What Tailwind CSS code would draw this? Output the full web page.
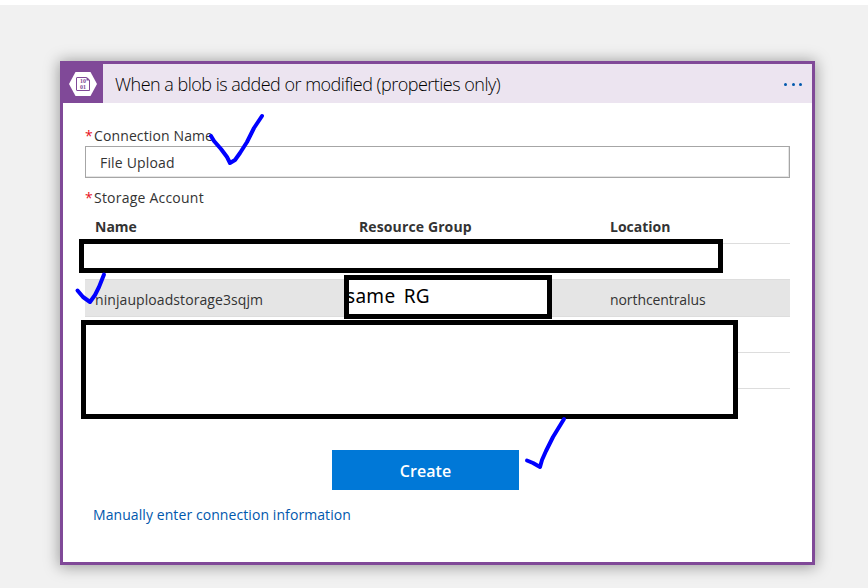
<!DOCTYPE html>
<html lang="en">
<head>
<meta charset="utf-8">
<title>Blob trigger connection</title>
<script src="https://cdn.jsdelivr.net/npm/@tailwindcss/browser@4"></script>
</head>
<body class="relative h-[588px] w-[868px] overflow-hidden border-t-[5px] border-white bg-[#f1f1f1] pt-[56px] pl-[60px] font-['Open_Sans','Noto_Sans',sans-serif] text-[14px] text-[#333]">
<main class="h-[504px] w-[755px] border-[3px] border-[#804998] bg-white shadow-[0_1px_14px_1px_rgba(0,0,0,0.36)]">
  <header class="flex h-[39px] items-center bg-[#ece4f0]">
    <div class="flex h-[39px] w-10 shrink-0 items-center bg-[#804998] pl-[6px]">
      <svg width="28" height="24" viewBox="0 0 28 24">
        <path d="M0 12 6.5 0H21.5L28 12 21.5 24H6.5Z" fill="#fff"/>
        <path d="M8 5.500H17.500L20.500 8V18.500H8Q7.500 18.500 7.500 18V6Q7.500 5.500 8 5.500Z" fill="none" stroke="#804998" stroke-width="1"/>
        <path d="M17.500 5V8.500H21Z" fill="#804998"/>
        <text x="11" y="11" font-family="Liberation Serif" font-size="5.500" font-weight="700" textLength="6" lengthAdjust="spacingAndGlyphs" fill="#804998">10</text>
        <text x="11" y="17" font-family="Liberation Serif" font-size="5.500" font-weight="700" textLength="6" lengthAdjust="spacingAndGlyphs" fill="#804998">01</text>
      </svg>
    </div>
    <h1 class="mt-px ml-3 flex-1 whitespace-nowrap text-[18px] leading-6 font-light tracking-[-0.51px] text-black">When a blob is added or modified (properties only)</h1>
    <div class="mt-[2px] mr-[10px] flex gap-[4.500px]">
      <i class="size-[3px] rounded-full bg-[#0058ad]"></i><i class="size-[3px] rounded-full bg-[#0058ad]"></i><i class="size-[3px] rounded-full bg-[#0058ad]"></i>
    </div>
  </header>
  <section class="pr-[22px] pl-[22px]">
    <div class="flex h-[43px] items-end leading-5 tracking-[0.12px]"><span class="w-[9px] text-[#e81123]">*</span><span>Connection Name</span></div>
    <div class="flex h-[32px] items-center border border-[#a6a6a6] pl-[14px] tracking-[0.17px] shadow-[inset_-1px_-1px_0_#e5e5e5]">File Upload</div>
    <div class="flex h-[30px] items-end leading-5 tracking-[0.22px]"><span class="w-[9px] text-[#e81123]">*</span><span>Storage Account</span></div>
    <table class="w-[705px] table-fixed border-collapse text-left">
      <colgroup><col class="w-[264px]"><col class="w-[251px]"><col></colgroup>
      <thead><tr class="h-[35px] border-b border-[#ddd]"><th class="p-0 pt-[3px] pl-[10px] font-bold">Name</th><th class="p-0 pt-[3px] pl-[10px] font-bold tracking-[0.12px]">Resource Group</th><th class="p-0 pt-[3px] pl-[10px] font-bold">Location</th></tr></thead>
      <tbody>
        <tr class="h-[36px] border-b border-[#ddd]"><td class="p-0" colspan="3"></td></tr>
        <tr class="h-[37px] border-b border-[#ddd] bg-[#e5e5e5]"><td class="p-0 pt-[3px] pl-[10px] tracking-[0.08px]">ninjauploadstorage3sqjm</td><td class="p-0"></td><td class="p-0 pt-[3px] pl-[10px] tracking-[-0.08px]">northcentralus</td></tr>
        <tr class="h-[36px] border-b border-[#ddd]"><td class="p-0" colspan="3"></td></tr>
        <tr class="h-[36px] border-b border-[#ddd]"><td class="p-0" colspan="3"></td></tr>
      </tbody>
    </table>
    <div class="mt-[61px] flex justify-center"><button class="mr-[24px] h-10 w-[187px] bg-[#0078d7] pt-[3px] text-[16px] font-semibold tracking-[0.1px] text-white">Create</button></div>
    <a class="mt-[15px] ml-2 block w-max leading-5 tracking-[0.08px] text-[#0058ad]">Manually enter connection information</a>
  </section>
</main>
<div class="absolute top-[234px] left-[79px] h-[34px] w-[644px] border-[5px] border-black bg-white"></div>
<div class="absolute top-[270px] left-[344px] h-[44px] w-[208px] overflow-hidden border-[5px] border-black bg-white"><span class="-ml-[3px] block font-['Noto_Sans'] text-[19px] leading-8 tracking-[0.3px] whitespace-nowrap text-black [word-spacing:3px]">same RG</span></div>
<div class="absolute top-[315px] left-[81px] h-[99px] w-[657px] border-[5px] border-black bg-white"></div>
<svg class="absolute -top-[5px] left-0" width="868" height="588" viewBox="0 0 868 588" fill="none" stroke="#00f" stroke-width="4" stroke-linecap="round" stroke-linejoin="round">
  <path d="M211 136 214 141 221 149 227 157 230 163 235 160 240 153 247 142 254 128 262 116"/>
  <path d="M77.500 290.500 83 297 90 302 95 295 99 287 104 274.500"/>
  <path d="M527 460.500 533 463 540 467 542 460 546 451 553 437 564 419"/>
</svg>
</body>
</html>
